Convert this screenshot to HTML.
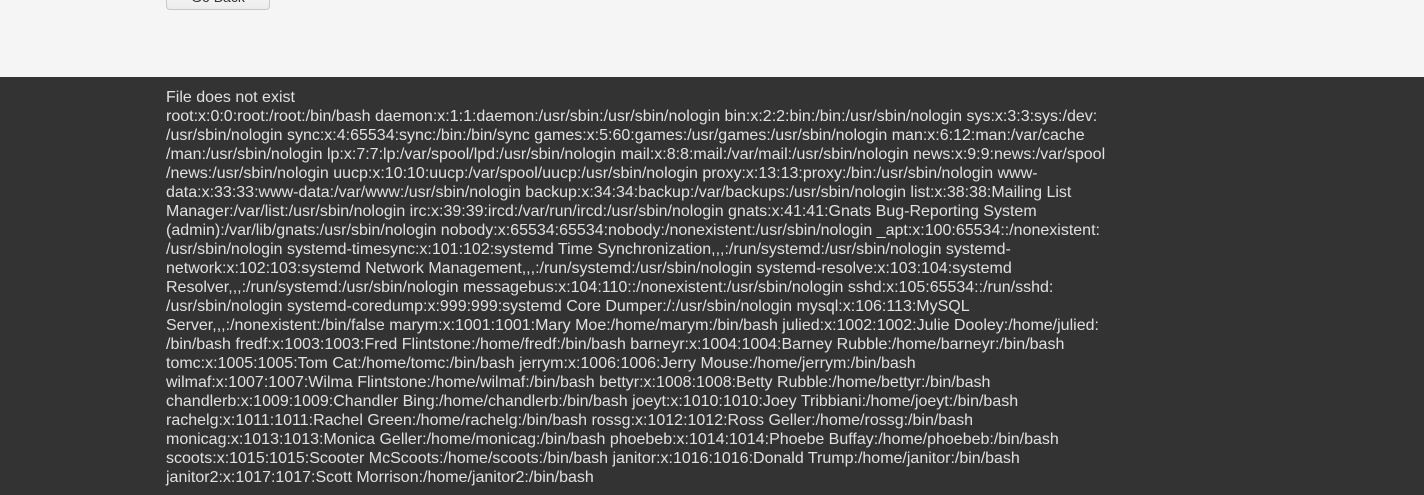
<!DOCTYPE html>
<html><head><meta charset="utf-8"><style>
html,body{margin:0;padding:0;width:1424px;height:495px;overflow:hidden;font-family:"Liberation Sans",sans-serif;}
.top{position:absolute;left:0;top:0;width:1424px;height:77px;background:#f5f5f5;}
.btn{position:absolute;left:166px;top:-20px;width:102px;height:28px;border:1px solid #c8c8c8;border-radius:4px;background:linear-gradient(#fff,#ececec);font-size:14px;color:#333;text-align:center;line-height:28px;}
.btn span{position:relative;top:2px;}
.dark{position:absolute;left:0;top:77px;width:1424px;height:418px;background:#333333;}
.txt{position:absolute;left:166px;top:10.5px;font-size:16px;line-height:19px;color:#e0e0e0;white-space:pre;}
</style></head><body>
<div class="top"><div class="btn"><span>Go Back</span></div></div>
<div class="dark"><div class="txt">File does not exist
root:x:0:0:root:/root:/bin/bash daemon:x:1:1:daemon:/usr/sbin:/usr/sbin/nologin bin:x:2:2:bin:/bin:/usr/sbin/nologin sys:x:3:3:sys:/dev:
/usr/sbin/nologin sync:x:4:65534:sync:/bin:/bin/sync games:x:5:60:games:/usr/games:/usr/sbin/nologin man:x:6:12:man:/var/cache
/man:/usr/sbin/nologin lp:x:7:7:lp:/var/spool/lpd:/usr/sbin/nologin mail:x:8:8:mail:/var/mail:/usr/sbin/nologin news:x:9:9:news:/var/spool
/news:/usr/sbin/nologin uucp:x:10:10:uucp:/var/spool/uucp:/usr/sbin/nologin proxy:x:13:13:proxy:/bin:/usr/sbin/nologin www-
data:x:33:33:www-data:/var/www:/usr/sbin/nologin backup:x:34:34:backup:/var/backups:/usr/sbin/nologin list:x:38:38:Mailing List
Manager:/var/list:/usr/sbin/nologin irc:x:39:39:ircd:/var/run/ircd:/usr/sbin/nologin gnats:x:41:41:Gnats Bug-Reporting System
(admin):/var/lib/gnats:/usr/sbin/nologin nobody:x:65534:65534:nobody:/nonexistent:/usr/sbin/nologin _apt:x:100:65534::/nonexistent:
/usr/sbin/nologin systemd-timesync:x:101:102:systemd Time Synchronization,,,:/run/systemd:/usr/sbin/nologin systemd-
network:x:102:103:systemd Network Management,,,:/run/systemd:/usr/sbin/nologin systemd-resolve:x:103:104:systemd
Resolver,,,:/run/systemd:/usr/sbin/nologin messagebus:x:104:110::/nonexistent:/usr/sbin/nologin sshd:x:105:65534::/run/sshd:
/usr/sbin/nologin systemd-coredump:x:999:999:systemd Core Dumper:/:/usr/sbin/nologin mysql:x:106:113:MySQL
Server,,,:/nonexistent:/bin/false marym:x:1001:1001:Mary Moe:/home/marym:/bin/bash julied:x:1002:1002:Julie Dooley:/home/julied:
/bin/bash fredf:x:1003:1003:Fred Flintstone:/home/fredf:/bin/bash barneyr:x:1004:1004:Barney Rubble:/home/barneyr:/bin/bash
tomc:x:1005:1005:Tom Cat:/home/tomc:/bin/bash jerrym:x:1006:1006:Jerry Mouse:/home/jerrym:/bin/bash
wilmaf:x:1007:1007:Wilma Flintstone:/home/wilmaf:/bin/bash bettyr:x:1008:1008:Betty Rubble:/home/bettyr:/bin/bash
chandlerb:x:1009:1009:Chandler Bing:/home/chandlerb:/bin/bash joeyt:x:1010:1010:Joey Tribbiani:/home/joeyt:/bin/bash
rachelg:x:1011:1011:Rachel Green:/home/rachelg:/bin/bash rossg:x:1012:1012:Ross Geller:/home/rossg:/bin/bash
monicag:x:1013:1013:Monica Geller:/home/monicag:/bin/bash phoebeb:x:1014:1014:Phoebe Buffay:/home/phoebeb:/bin/bash
scoots:x:1015:1015:Scooter McScoots:/home/scoots:/bin/bash janitor:x:1016:1016:Donald Trump:/home/janitor:/bin/bash
janitor2:x:1017:1017:Scott Morrison:/home/janitor2:/bin/bash</div></div>
</body></html>
